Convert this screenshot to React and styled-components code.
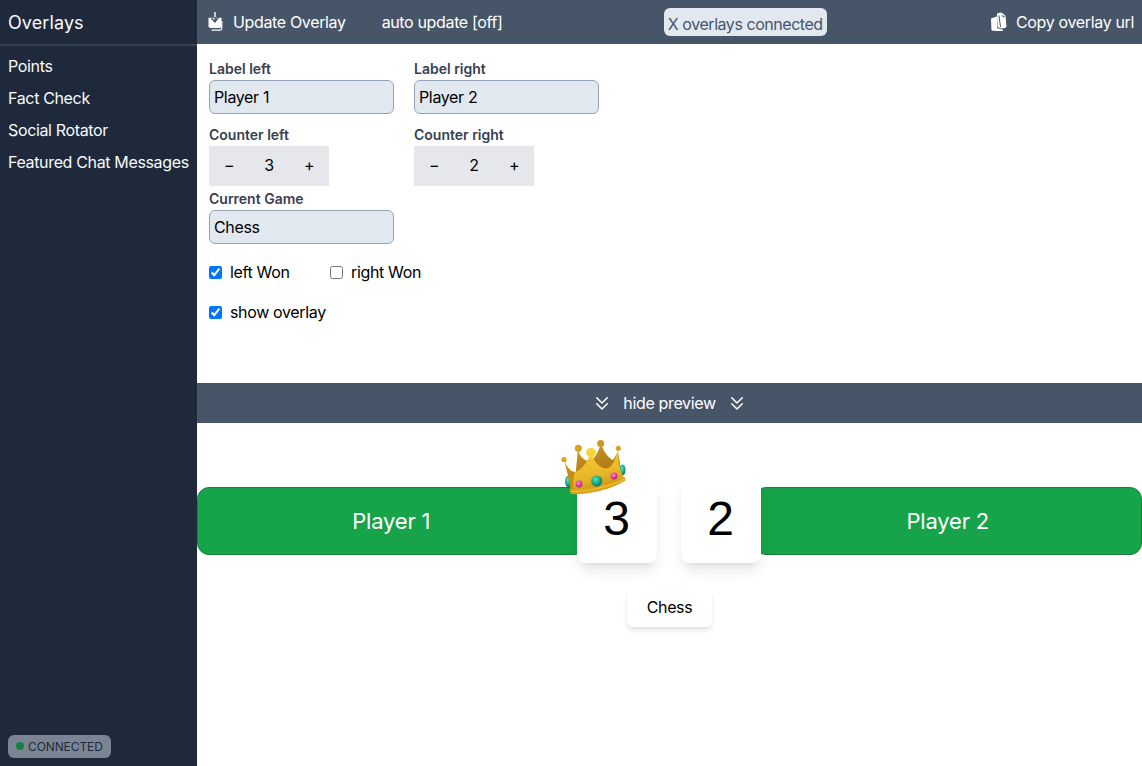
import { useState } from "react";
import styled, { createGlobalStyle } from "styled-components";
import { HiOutlineChevronDoubleDown } from "react-icons/hi";

const GlobalStyle = createGlobalStyle`
    html, body {
        margin: 0;
        padding: 0;
        height: 100%;
        background: #fff;
        font-family: Inter, "Liberation Sans", sans-serif;
        font-size: 16px;
        letter-spacing: -0.35px;
        color: #000;
    }
    * { box-sizing: border-box; }
`;

const Layout = styled.div`
    display: flex;
    width: 100%;
    height: 100vh;
    overflow: hidden;
`;

const Sidebar = styled.aside`
    display: flex;
    flex-direction: column;
    flex: 0 0 197px;
    width: 197px;
    min-width: 0;
    background: #1e293b;
    color: #fff;
`;

const Brand = styled.div`
    height: 46px;
    padding: 0 8px;
    display: flex;
    align-items: center;
    font-size: 18px;
    letter-spacing: 0.1px;
    border-bottom: 2px solid #334155;
    color: #f8fafc;
`;

const Nav = styled.nav`
    display: flex;
    flex-direction: column;
    padding-top: 4px;
`;

const NavItem = styled.a`
    height: 32px;
    padding: 0 8px;
    display: flex;
    align-items: center;
    font-size: 16px;
    white-space: nowrap;
    color: #f8fafc;
`;

const StatusBadge = styled.div`
    display: flex;
    align-items: center;
    gap: 4px;
    align-self: flex-start;
    height: 23px;
    margin: auto 0 8px 8px;
    padding: 0 8px 1px;
    border-radius: 6px;
    background: #7b8493;
    color: #1e293b;
    font-size: 12px;
    letter-spacing: -0.1px;
`;

const Dot = styled.span`
    width: 8px;
    height: 8px;
    border-radius: 50%;
    background: #15803d;
`;

const Main = styled.main`
    flex: 1;
    min-width: 0;
    display: flex;
    flex-direction: column;
`;

const TopBar = styled.header`
    display: flex;
    align-items: center;
    flex: 0 0 44px;
    padding: 0 8px 0 10px;
    background: #475569;
    color: #fff;
    font-size: 16px;
`;

const TopAction = styled.div`
    display: flex;
    align-items: center;
    gap: 10px;
    margin-right: ${(p) => p.$gap || 0}px;
    white-space: nowrap;
    svg { display: block; }
`;

const ConnectedBadge = styled.div`
    margin: 0 auto;
    height: 28px;
    padding: 4px 4px 0;
    border-radius: 6px;
    background: #e2e8f0;
    color: #475569;
    line-height: 24px;
    letter-spacing: -0.45px;
    white-space: nowrap;
`;

const FormPanel = styled.section`
    flex: 0 0 339px;
    padding: 15px 12px 0;
`;

const FieldRow = styled.div`
    display: flex;
    gap: 20px;
    margin-top: ${(p) => p.$top || 0}px;
`;

const Field = styled.div`
    width: 185px;
    margin-top: ${(p) => p.$top || 0}px;
`;

const Label = styled.label`
    display: block;
    height: 21px;
    font-size: 14px;
    line-height: 20px;
    font-weight: 600;
    letter-spacing: 0;
    color: #374151;
`;

const TextInput = styled.input`
    display: block;
    width: 185px;
    height: 34px;
    padding: 0 4px;
    border: 1px solid #94a3b8;
    border-radius: 6px;
    background: #e2e8f0;
    color: #000;
    font: inherit;
    letter-spacing: inherit;
    outline: none;
`;

const Counter = styled.div`
    display: grid;
    grid-template-columns: 40px 40px 40px;
    width: 120px;
    height: 40px;
    background: #e5e7eb;
`;

const CounterCell = styled.span`
    display: flex;
    align-items: center;
    justify-content: center;
    padding-bottom: 2px;
    font-size: 16px;
`;

const CheckRow = styled.div`
    display: flex;
    align-items: center;
    height: 20px;
    margin-top: ${(p) => p.$top}px;
`;

const CheckLabel = styled.label`
    display: flex;
    align-items: center;
    width: 121px;
    white-space: nowrap;
`;

const Check = styled.input`
    width: 13px;
    height: 13px;
    margin: 0 8px 0 0;
    accent-color: #0075ff;
`;

const PreviewToggle = styled.div`
    display: flex;
    align-items: center;
    justify-content: center;
    gap: 12px;
    flex: 0 0 40px;
    background: #475569;
    color: #fff;
    font-size: 16px;
`;

const Preview = styled.section`
    flex: 1;
    display: flex;
    flex-direction: column;
    align-items: center;
    padding-top: 55px;
`;

const Scoreboard = styled.div`
    display: flex;
    align-items: center;
    width: 100%;
`;

const PlayerName = styled.div`
    flex: 1;
    height: 68px;
    display: flex;
    align-items: center;
    justify-content: center;
    background: #16a34a;
    border: 1px solid #15803d;
    border-radius: 12px;
    color: #fff;
    font-size: 22px;
    letter-spacing: -0.2px;
    margin-${(p) => p.$side}: ${(p) => p.$overlap}px;
`;

const ScoreCard = styled.div`
    position: relative;
    z-index: 1;
    flex: 0 0 80px;
    height: 85px;
    margin: ${(p) => p.$margin};
    display: flex;
    align-items: center;
    justify-content: center;
    background: #fff;
    border-radius: 8px;
    box-shadow: 0 10px 15px -3px rgba(0, 0, 0, 0.1), 0 4px 6px -4px rgba(0, 0, 0, 0.1);
    font-family: "Liberation Sans", Arial, sans-serif;
    font-size: 48px;
    letter-spacing: 0;
    padding-bottom: 4px;
`;

const CrownArt = styled.svg`
    position: absolute;
    left: -16px;
    top: -38px;
    z-index: 2;
`;

const GameCard = styled.div`
    margin-top: 25px;
    height: 39px;
    padding: 0 20px 1px;
    display: flex;
    align-items: center;
    background: #fff;
    border-radius: 6px;
    box-shadow: 0 4px 6px -1px rgba(0, 0, 0, 0.1), 0 2px 4px -2px rgba(0, 0, 0, 0.1);
    font-size: 16px;
`;

const SaveIcon = () => (
    <svg width="16" height="22" viewBox="0 0 16 22" fill="#fff">
        <path d="M1.500 6.800h13V15c0 1.100-.9 2-2 2h-9c-1.100 0-2-.9-2-2z" />
        <path d="M7.300 1h1.400v7.200l2.400-2.400 1 1L8 11.900 3.900 7.800l1-1 2.400 2.400z" fill="#475569" />
        <path d="M7.300 1h1.400v5H7.300z" />
        <path d="M15.400 10v7.200c0 1.500-1 2.500-2.500 2.500H4.500v-1.200h8.400c.8 0 1.300-.5 1.300-1.300V10z" />
    </svg>
);

const CopyIcon = () => (
    <svg width="18" height="20" viewBox="-2 0 18 20" fill="#fff" overflow="visible">
        <path d="M1 6.500 7 4.500v12.800l1.500 1.500H3.200c-1 0-1.700-.6-1.800-1.600z" />
        <path d="M7 1.500 10.500.5l2.500 1 2.500 2.200.9 10.300c.1 1-.4 1.700-1.400 1.900l-3.500.5-4-1.500z" />
        <path d="M12.300 2.500 15 5l-2.400.3z" fill="#475569" />
        <path d="M9 3.500 10.500 15" stroke="#475569" strokeWidth="1" fill="none" />
        <path d="M7 16 11.500 17.200c1 .3 1.600 1 1.500 1.700H5z" />
    </svg>
);

const Crown = () => (
    <CrownArt width="66" height="57" viewBox="0 0 66 57">
        <defs>
            <linearGradient id="crownGold" x1="0.1" y1="0.1" x2="0.4" y2="1">
                <stop offset="0" stopColor="#f6cf38" />
                <stop offset="0.65" stopColor="#e7b526" />
                <stop offset="1" stopColor="#c8920f" />
            </linearGradient>
            <linearGradient id="crownBack" x1="0" y1="0" x2="0.5" y2="1">
                <stop offset="0" stopColor="#d29a28" />
                <stop offset="1" stopColor="#a97312" />
            </linearGradient>
            <radialGradient id="crownTeal" cx="0.4" cy="0.35" r="0.7">
                <stop offset="0" stopColor="#5fe0bd" />
                <stop offset="0.6" stopColor="#12a383" />
                <stop offset="1" stopColor="#0a6d5c" />
            </radialGradient>
            <radialGradient id="crownPink" cx="0.4" cy="0.35" r="0.7">
                <stop offset="0" stopColor="#ff8fd0" />
                <stop offset="0.6" stopColor="#d936a5" />
                <stop offset="1" stopColor="#a01f7e" />
            </radialGradient>
        </defs>
        <path d="M17 9 C18 15 22 20 27 21 L33 18 C36 14 38 9 40 4 C42 10 47 18 52 20 L57 12 L60 30 L14 40z" fill="url(#crownBack)" />
        <ellipse cx="7.500" cy="41.500" rx="3.500" ry="6" fill="url(#crownTeal)" />
        <ellipse cx="61.500" cy="30" rx="3" ry="5.500" fill="url(#crownTeal)" />
        <path d="M3 20 C6 28 10 32 14 32 C21 30 26 22 30 13 C33 22 40 30 47 28 C52 26 55 18 57 9 C57 18 58 28 62 36 L64 40 C50 50 25 55 10 53 C9 42 6 30 3 20z" fill="url(#crownGold)" />
        <path d="M3 20 C6 28 10 32 14 32 C12 38 12 44 12 52 L10 53 C9 42 6 30 3 20z" fill="#c48d14" />
        <path d="M9 49 C25 50 48 45 64 37 L64.500 40.500 C50 50 25 55 10 54z" fill="#dca31b" />
        <path d="M9.500 51.500C25 52 48 47 64 39" stroke="#f5cb45" strokeWidth="0.8" fill="none" />
        <circle cx="3" cy="19.500" r="2.600" fill="#dca41e" />
        <circle cx="17.300" cy="8.300" r="3.500" fill="#d9a11e" />
        <circle cx="30" cy="12.700" r="4.800" fill="#f8d43a" />
        <circle cx="39.700" cy="3.600" r="3.500" fill="#cf981f" />
        <circle cx="57.300" cy="8.300" r="2.600" fill="#dca41e" />
        <circle cx="35.700" cy="41" r="5.500" fill="url(#crownTeal)" />
        <circle cx="18" cy="44" r="3.400" fill="url(#crownPink)" />
        <circle cx="53" cy="36" r="3.400" fill="url(#crownPink)" />
    </CrownArt>
);

const CounterField = ({ label, value }) => (
    <Field>
        <Label>{label}</Label>
        <Counter>
            <CounterCell>−</CounterCell>
            <CounterCell>{value}</CounterCell>
            <CounterCell>+</CounterCell>
        </Counter>
    </Field>
);

const navItems = ["Points", "Fact Check", "Social Rotator", "Featured Chat Messages"];

const App = () => {
    const [left, setLeft] = useState("Player 1");
    const [right, setRight] = useState("Player 2");
    const [game, setGame] = useState("Chess");
    return (
        <Layout>
            <GlobalStyle />
            <Sidebar>
                <Brand>Overlays</Brand>
                <Nav>
                    {navItems.map((item) => (
                        <NavItem key={item}>{item}</NavItem>
                    ))}
                </Nav>
                <StatusBadge>
                    <Dot />
                    CONNECTED
                </StatusBadge>
            </Sidebar>
            <Main>
                <TopBar>
                    <TopAction $gap={36}>
                        <SaveIcon />
                        Update Overlay
                    </TopAction>
                    <TopAction>auto update [off]</TopAction>
                    <ConnectedBadge>X overlays connected</ConnectedBadge>
                    <TopAction>
                        <CopyIcon />
                        Copy overlay url
                    </TopAction>
                </TopBar>
                <FormPanel>
                    <FieldRow>
                        <Field>
                            <Label>Label left</Label>
                            <TextInput value={left} onChange={(e) => setLeft(e.target.value)} />
                        </Field>
                        <Field>
                            <Label>Label right</Label>
                            <TextInput value={right} onChange={(e) => setRight(e.target.value)} />
                        </Field>
                    </FieldRow>
                    <FieldRow $top={11}>
                        <CounterField label="Counter left" value={3} />
                        <CounterField label="Counter right" value={2} />
                    </FieldRow>
                    <Field $top={3}>
                        <Label>Current Game</Label>
                        <TextInput value={game} onChange={(e) => setGame(e.target.value)} />
                    </Field>
                    <CheckRow $top={18}>
                        <CheckLabel>
                            <Check type="checkbox" defaultChecked />
                            left Won
                        </CheckLabel>
                        <CheckLabel>
                            <Check type="checkbox" />
                            right Won
                        </CheckLabel>
                    </CheckRow>
                    <CheckRow $top={20}>
                        <CheckLabel>
                            <Check type="checkbox" defaultChecked />
                            show overlay
                        </CheckLabel>
                    </CheckRow>
                </FormPanel>
                <PreviewToggle>
                    <HiOutlineChevronDoubleDown size={18} />
                    hide preview
                    <HiOutlineChevronDoubleDown size={18} />
                </PreviewToggle>
                <Preview>
                    <Scoreboard>
                        <PlayerName $side="right" $overlap={-9}>{left}</PlayerName>
                        <ScoreCard $margin="0 12px 0 0">
                            <Crown />3
                        </ScoreCard>
                        <ScoreCard $margin="0 0 0 12px">2</ScoreCard>
                        <PlayerName $side="left" $overlap={-7}>{right}</PlayerName>
                    </Scoreboard>
                    <GameCard>{game}</GameCard>
                </Preview>
            </Main>
        </Layout>
    );
};

export default App;
